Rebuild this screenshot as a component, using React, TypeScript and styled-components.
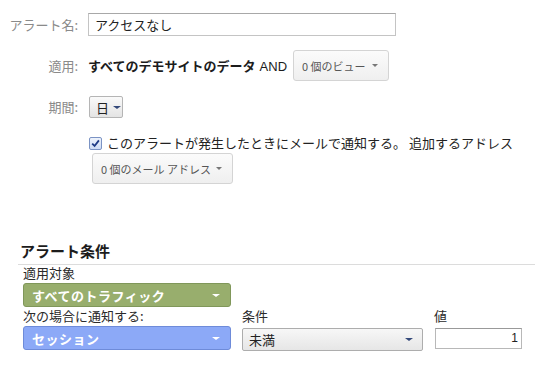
import styled, { createGlobalStyle } from 'styled-components'

const GlobalStyle = createGlobalStyle`
  body {
    margin: 0;
    background: #ffffff;
    font-family: 'Noto Sans CJK JP', 'Noto Sans', sans-serif;
    font-size: 13px;
    color: #222;
  }
`

const Page = styled.div`
  padding: 13px 0 0 7px;
  width: 535px;
  box-sizing: border-box;
`

const Row = styled.div<{ $top?: number }>`
  display: flex;
  align-items: center;
  gap: 10px;
  margin-top: ${(p) => p.$top ?? 0}px;
`

const Label = styled.span`
  width: 71px;
  flex: none;
  text-align: right;
  color: #8a8a8a;
  line-height: 18px;
`

const NameInput = styled.div`
  width: 308px;
  height: 23px;
  box-sizing: border-box;
  border: 1px solid #c4c4c4;
  border-top-color: #a8a8a8;
  padding: 0 6px;
  display: flex;
  align-items: center;
  color: #222;
`

const Scope = styled.div`
  display: flex;
  align-items: center;
  gap: 6px;
`

const Strong = styled.span`
  font-weight: 700;
  color: #1c1c1c;
`

const And = styled.span`
  font-family: 'Liberation Sans', sans-serif;
  font-weight: 400;
  font-size: 13px;
  margin-left: 4px;
`

const Caret = styled.span<{ $color?: string; $size?: number }>`
  width: 0;
  height: 0;
  border-left: ${(p) => p.$size ?? 4}px solid transparent;
  border-right: ${(p) => p.$size ?? 4}px solid transparent;
  border-top: ${(p) => (p.$size ?? 4) - 0.5}px solid ${(p) => p.$color ?? '#777'};
  flex: none;
`

const MenuButton = styled.div<{ $width: number; $height: number; $left?: number }>`
  display: flex;
  align-items: center;
  justify-content: space-between;
  width: ${(p) => p.$width}px;
  height: ${(p) => p.$height}px;
  margin-left: ${(p) => p.$left ?? 0}px;
  box-sizing: border-box;
  padding: 0 10px 0 8px;
  border: 1px solid #d4d4d4;
  border-radius: 3px;
  background: linear-gradient(180deg, #fbfbfb 0%, #efefef 100%);
  color: #555;
  font-size: 11px;
`

const PeriodButton = styled.div`
  display: flex;
  align-items: center;
  gap: 4px;
  width: 34px;
  height: 22px;
  box-sizing: border-box;
  padding: 0 0 0 6px;
  margin-left: 1px;
  border: 1px solid #b5b5b5;
  border-radius: 2px;
  background: linear-gradient(180deg, #fafafa 0%, #e4e4e4 100%);
  color: #222;
`

const NotifyBlock = styled.div`
  display: flex;
  flex-direction: column;
  margin-left: 81px;
  margin-top: 16px;
`

const CheckLine = styled.label`
  display: flex;
  align-items: center;
  gap: 5px;
  line-height: 18px;
  color: #222;
`

const CheckBox = styled.span`
  width: 11px;
  height: 11px;
  flex: none;
  margin-left: 1px;
  border: 1px solid #7b93c4;
  border-radius: 2px;
  background: linear-gradient(180deg, #eef3fc 0%, #cddbf4 100%);
  display: flex;
  align-items: center;
  justify-content: center;
`

const MailMenu = styled(MenuButton)`
  margin-top: 1px;
`

const Conditions = styled.section`
  margin-top: 57px;
  margin-left: 11px;
`

const Title = styled.h2`
  margin: 0;
  padding: 0 0 3px 2px;
  font-size: 15px;
  line-height: 20px;
  font-weight: 700;
  color: #1c1c1c;
  border-bottom: 1px solid #dcdcdc;
`

const Body = styled.div`
  padding-left: 5px;
`

const FieldLabel = styled.div`
  line-height: 15px;
  color: #2a2a2a;
`

const ColorSelect = styled.div<{ $bg: string; $border: string; $top: number }>`
  display: flex;
  align-items: center;
  justify-content: space-between;
  width: 208px;
  height: 24px;
  box-sizing: border-box;
  margin-top: ${(p) => p.$top}px;
  padding: 0 10px 0 8px;
  border: 1px solid ${(p) => p.$border};
  border-radius: 3px;
  background: ${(p) => p.$bg};
  color: #fff;
  font-weight: 700;
  letter-spacing: 0.5px;
`

const Grid = styled.div`
  display: grid;
  grid-template-columns: 208px 181px 88px;
  column-gap: 11px;
  margin-top: 1px;
`

const Col = styled.div`
  display: flex;
  flex-direction: column;
`

const PlainSelect = styled.div`
  display: flex;
  align-items: center;
  justify-content: space-between;
  height: 23px;
  box-sizing: border-box;
  margin-top: 5px;
  padding: 0 9px 0 6px;
  border: 1px solid #adadad;
  border-radius: 2px;
  background: linear-gradient(180deg, #f7f7f7 0%, #e6e6e6 100%);
  color: #222;
`

const ValueInput = styled.div`
  height: 21px;
  box-sizing: border-box;
  margin-top: 5px;
  margin-left: 1px;
  padding: 0 3px;
  border: 1px solid #b8b8b8;
  border-top-color: #999;
  text-align: right;
  line-height: 19px;
  font-family: 'Liberation Sans', sans-serif;
  font-size: 12px;
  color: #222;
`

export default function App() {
  return (
    <Page>
      <GlobalStyle />
      <Row>
        <Label>アラート名:</Label>
        <NameInput>アクセスなし</NameInput>
      </Row>
      <Row $top={14}>
        <Label>適用:</Label>
        <Scope>
          <Strong>
            すべてのデモサイトのデータ<And>AND</And>
          </Strong>
          <MenuButton $width={96} $height={31}>
            0 個のビュー
            <Caret $size={3.5} />
          </MenuButton>
        </Scope>
      </Row>
      <Row $top={15}>
        <Label>期間:</Label>
        <PeriodButton>
          日
          <Caret $color="#34497a" $size={4} />
        </PeriodButton>
      </Row>
      <NotifyBlock>
        <CheckLine>
          <CheckBox>
            <svg width="9" height="9" viewBox="0 0 9 9">
              <path d="M1.2 4.6 L3.6 7 L7.9 1.4" fill="none" stroke="#1d3a85" strokeWidth="1.8" />
            </svg>
          </CheckBox>
          このアラートが発生したときにメールで通知する。 追加するアドレス
        </CheckLine>
        <MailMenu $width={141} $height={31} $left={4}>
          0 個のメール アドレス
          <Caret $size={3.5} />
        </MailMenu>
      </NotifyBlock>
      <Conditions>
        <Title>アラート条件</Title>
        <Body>
          <FieldLabel>適用対象</FieldLabel>
          <ColorSelect $bg="#98ae6d" $border="#80975a" $top={3}>
            すべてのトラフィック
            <Caret $color="#fff" $size={4} />
          </ColorSelect>
          <Grid>
            <Col>
              <FieldLabel>次の場合に通知する:</FieldLabel>
              <ColorSelect $bg="#8ca9f7" $border="#6e8bd9" $top={3}>
                セッション
                <Caret $color="#fff" $size={4} />
              </ColorSelect>
            </Col>
            <Col>
              <FieldLabel>条件</FieldLabel>
              <PlainSelect>
                未満
                <Caret $color="#34497a" $size={4} />
              </PlainSelect>
            </Col>
            <Col>
              <FieldLabel>値</FieldLabel>
              <ValueInput>1</ValueInput>
            </Col>
          </Grid>
        </Body>
      </Conditions>
    </Page>
  )
}
